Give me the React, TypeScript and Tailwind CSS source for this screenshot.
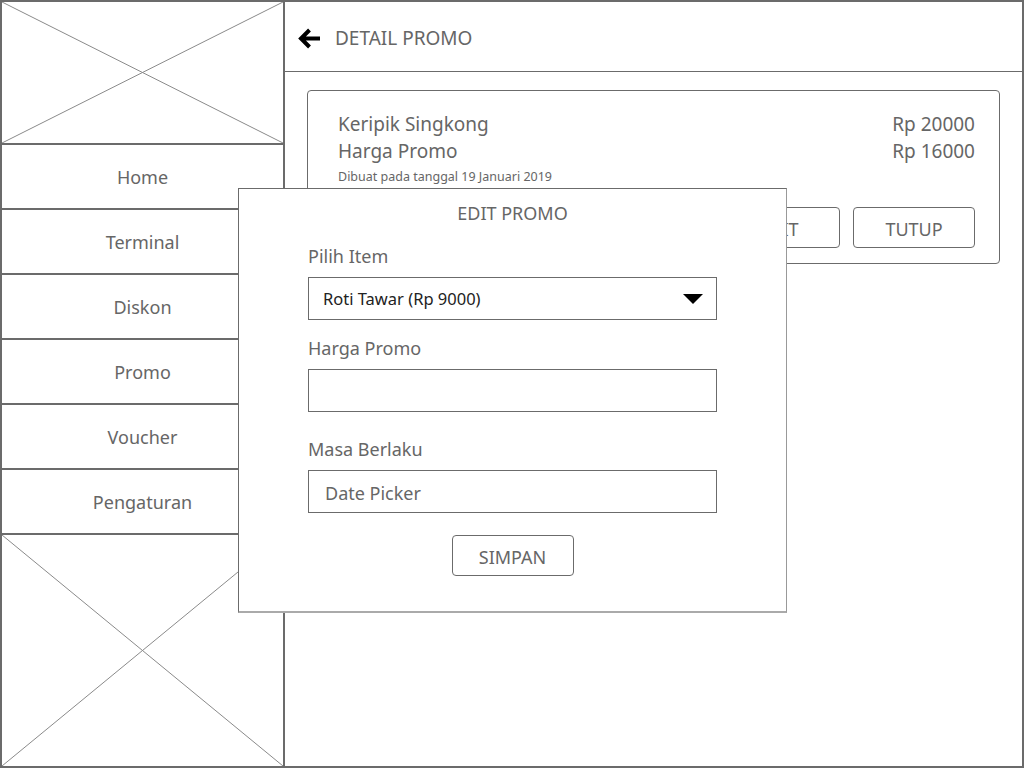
import React from "react";

const font = { fontFamily: '"Noto Sans", "Open Sans", sans-serif' };

function Placeholder({ className }: { className?: string }) {
  return (
    <div className={"relative " + (className ?? "")}>
      <svg className="absolute inset-0 w-full h-full" preserveAspectRatio="none" viewBox="0 0 100 100">
        <line x1="0" y1="0" x2="100" y2="100" stroke="#8a8a8a" strokeWidth="1" vectorEffect="non-scaling-stroke" />
        <line x1="100" y1="0" x2="0" y2="100" stroke="#8a8a8a" strokeWidth="1" vectorEffect="non-scaling-stroke" />
      </svg>
    </div>
  );
}

const menu = ["Home", "Terminal", "Diskon", "Promo", "Voucher", "Pengaturan"];

export default function App() {
  return (
    <div
      className="relative w-[1024px] h-[768px] bg-white border-2 border-[#6b6b6b] flex text-[#666] overflow-hidden"
      style={font}
    >
      {/* sidebar */}
      <aside className="w-[283px] shrink-0 border-r-2 border-[#6b6b6b] flex flex-col">
        <Placeholder className="h-[141px]" />
        {menu.map((m) => (
          <div
            key={m}
            className="h-[65px] border-t-2 border-[#6b6b6b] flex items-center justify-center pt-[2px] text-[18px]"
          >
            {m}
          </div>
        ))}
        <Placeholder className="flex-1 border-t-2 border-[#6b6b6b]" />
      </aside>

      {/* main */}
      <main className="flex-1 flex flex-col">
        <header className="h-[70px] border-b border-[#6b6b6b] flex items-center pl-[13px] pt-[3px] gap-[14px]">
          <svg width="23" height="21" viewBox="0 0 23 21">
            <path d="M11.5 2 L3 10.5 L11.5 19 M3 10.5 H22" stroke="#000" strokeWidth="4" fill="none" strokeLinejoin="miter" />
          </svg>
          <span className="text-[19px] text-[#666]">DETAIL PROMO</span>
        </header>

        <div className="pt-[18px] pl-[22px] pr-[22px]">
          <div className="border border-[#6b6b6b] rounded-[4px] h-[174px] pl-[30px] pr-[24px] pt-[20px] pb-[15px] flex flex-col">
            <div className="flex justify-between text-[19px] leading-[27px]">
              <span>Keripik Singkong</span>
              <span>Rp 20000</span>
            </div>
            <div className="flex justify-between text-[19px] leading-[27px]">
              <span>Harga Promo</span>
              <span>Rp 16000</span>
            </div>
            <div className="text-[12.5px] leading-[22px] mt-[1px]">Dibuat pada tanggal 19 Januari 2019</div>
            <div className="flex justify-end gap-[13px] mt-auto">
              <button className="w-[122px] h-[41px] pt-[3px] border border-[#6b6b6b] rounded-[4px] text-[18px]">EDIT</button>
              <button className="w-[122px] h-[41px] pt-[3px] border border-[#6b6b6b] rounded-[4px] text-[18px]">TUTUP</button>
            </div>
          </div>
        </div>
      </main>

      {/* modal */}
      <div className="absolute left-[236px] top-[186px] w-[549px] h-[425px] bg-white border border-[#6b6b6b] border-r-[#999] border-b-2 border-b-[#aaa] flex flex-col items-center">
        <div className="mt-[11px] text-[18px] leading-[26px]">EDIT PROMO</div>
        <div className="w-[409px] mt-[17px] flex flex-col">
          <label className="text-[18px] leading-[26px]">Pilih Item</label>
          <div className="mt-[8px] h-[43px] border border-[#6b6b6b] flex items-center justify-between pl-[14px] pr-[13px]">
            <span className="text-[16.5px] text-[#222] pt-[1px]">Roti Tawar (Rp 9000)</span>
            <svg width="20" height="10" viewBox="0 0 20 10">
              <path d="M0 0 H20 L10 10 Z" fill="#000" />
            </svg>
          </div>
          <label className="text-[18px] leading-[26px] mt-[15px]">Harga Promo</label>
          <div className="mt-[8px] h-[43px] border border-[#6b6b6b]" />
          <label className="text-[18px] leading-[26px] mt-[24px]">Masa Berlaku</label>
          <div className="mt-[8px] h-[43px] border border-[#6b6b6b] flex items-center pl-[16px] pt-[3px] text-[18px]">
            Date Picker
          </div>
          <div className="flex justify-center mt-[22px]">
            <button className="w-[122px] h-[41px] pt-[3px] border border-[#6b6b6b] rounded-[4px] text-[18px]">SIMPAN</button>
          </div>
        </div>
      </div>
    </div>
  );
}
